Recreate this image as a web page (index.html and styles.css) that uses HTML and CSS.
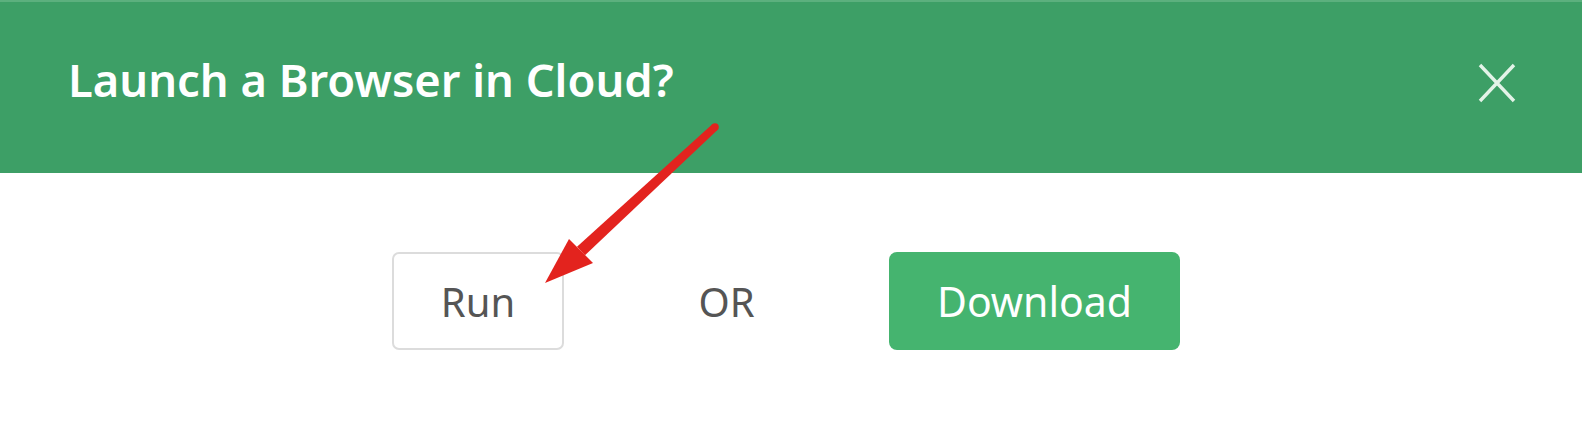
FILE: index.html
```html
<html>

<head>
    <link rel="stylesheet" href="styles.css">
</head>

<body>
    <div class="dialog">
        <div class="header">
            <h1 class="title">Launch a Browser in Cloud?</h1>
            <button class="close" aria-label="Close">
                <svg width="38" height="40" viewBox="0 0 38 40">
                    <path d="M2 2 L36 38 M36 2 L2 38" stroke="#e3f3e8" stroke-width="3.4" fill="none"/>
                </svg>
            </button>
        </div>
        <div class="content">
            <button class="run">Run</button>
            <span class="or">OR</span>
            <button class="download">Download</button>
        </div>
        <svg class="pointer" width="1582" height="444" viewBox="0 0 1582 444">
            <circle cx="715" cy="127" r="3.8" fill="#e3231e"/>
            <polygon points="717.7,129.8 712.3,124.2 577.0,246.8 585.0,255.2" fill="#e3231e"/>
            <polygon points="545,283 569,239 593,263" fill="#e3231e"/>
        </svg>
    </div>
</body>

</html>
```

FILE: styles.css
```css
body {
    margin: 0;
    background: #ffffff;
    font-family: "Noto Sans", "Open Sans", sans-serif;
}

.dialog {
    position: relative;
    height: 444px;
    overflow: hidden;
}

.header {
    height: 173px;
    background: #3d9f66;
    border-top: 2px solid #5cb07e;
    box-sizing: border-box;
    display: flex;
    align-items: center;
    justify-content: space-between;
    padding: 0 66px 0 68px;
}

.title {
    margin: 0 0 16px 0;
    color: #ffffff;
    font-size: 45.3px;
    font-weight: 600;
    letter-spacing: 0;
}

.close {
    background: none;
    border: none;
    padding: 0;
    margin-bottom: 10px;
    display: flex;
}

.content {
    display: flex;
    align-items: center;
    padding: 79px 0 0 392px;
}

.run {
    width: 172px;
    height: 98px;
    background: #ffffff;
    border: 2px solid #dcdcdc;
    border-radius: 7px;
    color: #555555;
    font-family: "Noto Sans", sans-serif;
    font-size: 40px;
}

.or {
    width: 325px;
    text-align: center;
    color: #555555;
    font-size: 40px;
}

.download {
    width: 291px;
    height: 98px;
    background: #45b46f;
    border: none;
    border-radius: 8px;
    color: #ffffff;
    font-family: "Noto Sans", sans-serif;
    font-size: 41px;
}

.pointer {
    position: absolute;
    left: 0;
    top: 0;
}
```
